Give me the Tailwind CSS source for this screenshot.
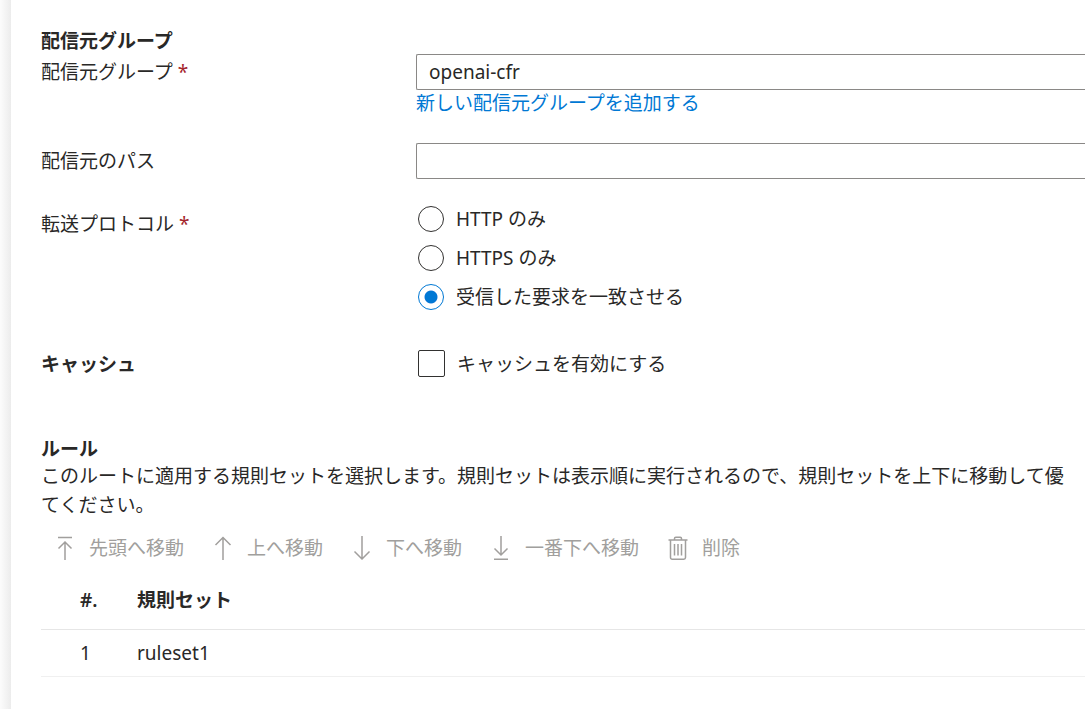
<!DOCTYPE html>
<html lang="ja">

<head>
    <meta charset="UTF-8">
    <meta name="viewport" content="width=device-width, initial-scale=1.0">
    <title>ルートの構成</title>
    <script src="https://cdn.jsdelivr.net/npm/@tailwindcss/browser@4"></script>
</head>

<body class="bg-white text-[#292827] text-[19px] leading-[26px] font-['Noto_Sans','Noto_Sans_CJK_JP',sans-serif]">
    <div class="flex min-h-screen overflow-hidden">
        <!-- Panel shadow -->
        <div class="w-[11px] shrink-0 bg-linear-to-r from-[#fcfcfc] to-[#ececec]"></div>

        <main class="flex-1 min-w-0 pt-7 pl-[30px]">
            <form>
                <h2 class="font-bold">配信元グループ</h2>

                <div class="grid grid-cols-[375px_1fr] gap-y-[27px]">
                    <label for="originGroup" class="leading-9">配信元グループ <span class="text-[#a4262c]">*</span></label>
                    <div>
                        <input type="text" id="originGroup" value="openai-cfr" class="block w-full h-9 px-3 border border-r-0 border-[#8a8886] rounded-l-xs outline-none">
                        <a href="#" class="block text-[#0078d4] hover:underline">新しい配信元グループを追加する</a>
                    </div>

                    <label for="originPath" class="leading-9">配信元のパス</label>
                    <input type="text" id="originPath" class="block w-full h-9 px-3 border border-r-0 border-[#8a8886] rounded-l-xs outline-none">

                    <span id="protocolLabel" class="leading-9">転送プロトコル <span class="text-[#a4262c]">*</span></span>
                    <div role="radiogroup" aria-labelledby="protocolLabel" class="flex flex-col gap-[13px] pl-0.5">
                        <label class="flex items-center gap-3">
                            <input type="radio" name="protocol" class="appearance-none size-[26px] rounded-full border border-[#323130] checked:border-[#0078d4] checked:bg-radial checked:from-[#0078d4] checked:from-[6px] checked:to-white checked:to-[7px]">
                            HTTP のみ
                        </label>
                        <label class="flex items-center gap-3">
                            <input type="radio" name="protocol" class="appearance-none size-[26px] rounded-full border border-[#323130] checked:border-[#0078d4] checked:bg-radial checked:from-[#0078d4] checked:from-[6px] checked:to-white checked:to-[7px]">
                            HTTPS のみ
                        </label>
                        <label class="flex items-center gap-3">
                            <input type="radio" name="protocol" checked class="appearance-none size-[26px] rounded-full border border-[#323130] checked:border-[#0078d4] checked:bg-radial checked:from-[#0078d4] checked:from-[6px] checked:to-white checked:to-[7px]">
                            受信した要求を一致させる
                        </label>
                    </div>
                </div>

                <div class="grid grid-cols-[375px_1fr] items-center mt-10">
                    <h2 class="font-bold">キャッシュ</h2>
                    <label class="flex items-center gap-3 pl-0.5">
                        <input type="checkbox" class="appearance-none size-[27px] rounded-xs border border-[#323130] checked:bg-[#0078d4]">
                        キャッシュを有効にする
                    </label>
                </div>
            </form>

            <section class="mt-[59px]">
                <h2 class="font-bold">ルール</h2>
                <p class="leading-[29px] whitespace-nowrap">このルートに適用する規則セットを選択します。規則セットは表示順に実行されるので、規則セットを上下に移動して優<br>てください。</p>

                <div class="flex items-center gap-[27px] mt-[15px] pl-3 text-[#a19f9d] whitespace-nowrap">
                    <button type="button" class="flex items-center gap-3" disabled>
                        <svg class="size-6" viewBox="0 0 24 24" fill="none" stroke="currentColor" stroke-width="1.5">
                            <path d="M5 1.5h14M12 24V5.5M5.5 12.5L12 6l6.5 6.5" />
                        </svg>
                        先頭へ移動
                    </button>
                    <button type="button" class="flex items-center gap-3" disabled>
                        <svg class="size-6" viewBox="0 0 24 24" fill="none" stroke="currentColor" stroke-width="1.5">
                            <path d="M12 24V1.500M4.500 9L12 1.500 19.500 9" />
                        </svg>
                        上へ移動
                    </button>
                    <button type="button" class="flex items-center gap-3" disabled>
                        <svg class="size-6" viewBox="0 0 24 24" fill="none" stroke="currentColor" stroke-width="1.5">
                            <path d="M12 0v23M4.5 15.5L12 23l7.5-7.5" />
                        </svg>
                        下へ移動
                    </button>
                    <button type="button" class="flex items-center gap-3" disabled>
                        <svg class="size-6" viewBox="0 0 24 24" fill="none" stroke="currentColor" stroke-width="1.5">
                            <path d="M5 23.2h14M12 0v19M5.5 12.5L12 19l6.5-6.5" />
                        </svg>
                        一番下へ移動
                    </button>
                    <button type="button" class="flex items-center gap-3" disabled>
                        <svg class="size-6" viewBox="0 0 24 24" fill="none" stroke="currentColor" stroke-width="1.5">
                            <path d="M2.5 4h19M8.5 4V2.500a1.300 1.300 0 0 1 1.300-1.300h4.400a1.300 1.300 0 0 1 1.300 1.300V4M4.500 4v17.500a1.700 1.700 0 0 0 1.700 1.700h11.600a1.700 1.700 0 0 0 1.700-1.700V4M8.500 8v11.500M12 8v11.500M15.500 8v11.500" />
                        </svg>
                        削除
                    </button>
                </div>

                <table class="w-full mt-[10px] border-collapse">
                    <thead>
                        <tr class="h-[58px] border-b border-[#e6e6e6]">
                            <th class="w-24 pl-[39px] text-left font-semibold">#.</th>
                            <th class="text-left font-bold">規則セット</th>
                        </tr>
                    </thead>
                    <tbody>
                        <tr class="h-[47px] border-b border-[#f0f0f0]">
                            <td class="pl-[39px]">1</td>
                            <td>ruleset1</td>
                        </tr>
                    </tbody>
                </table>
            </section>
        </main>
    </div>
</body>

</html>
